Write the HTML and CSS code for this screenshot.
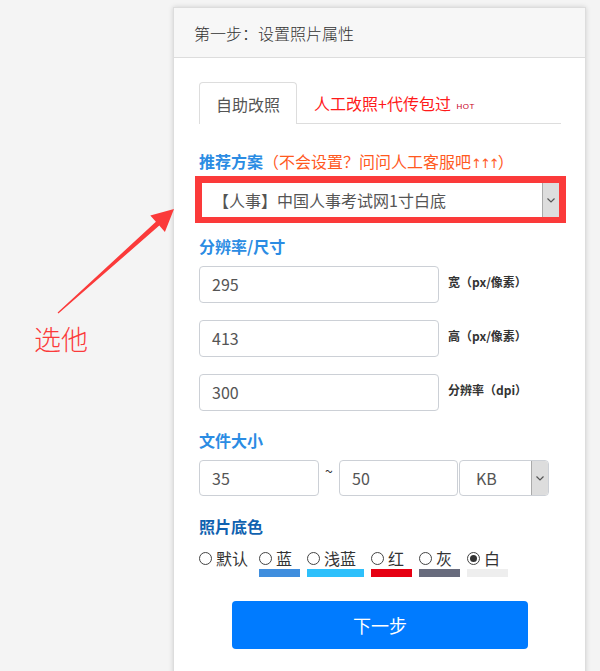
FILE: index.html
```html
<!DOCTYPE html>
<html lang="zh-CN">
<head>
    <meta charset="UTF-8">
    <meta name="viewport" content="width=device-width, initial-scale=1.0">
    <title>设置照片属性</title>
    <link rel="stylesheet" href="styles.css">
</head>
<body>
    <div class="hint">
        <svg class="hint-arrow" width="200" height="330" viewBox="0 0 200 330">
            <polygon points="57.6,312.4 155.9,221.8 150.3,215.5 174,209 164.9,231.9 159.3,225.6 58.4,313.6" fill="#fb3a3a"/>
        </svg>
        <span class="hint-text">选他</span>
    </div>

    <div class="card">
        <div class="card-head">第一步：设置照片属性</div>
        <div class="card-body">
            <div class="tabs">
                <div class="tab active">自助改照</div>
                <div class="tab hot">人工改照+代传包过 <sup>HOT</sup></div>
            </div>

            <div class="label">推荐方案<span class="tip">（不会设置？问问人工客服吧<span class="ups">↑↑↑</span>）</span></div>
            <div class="mark">
                <div class="select">
                    <span class="select-text">【人事】中国人事考试网1寸白底</span>
                    <span class="caret"><svg width="8" height="5" viewBox="0 0 8 5"><polyline points="0.5,0.5 4,4 7.5,0.5" fill="none" stroke="#555" stroke-width="1.2"/></svg></span>
                </div>
            </div>

            <div class="label">分辨率/尺寸</div>
            <div class="size-row">
                <div class="input">295</div>
                <span class="unit">宽（px/像素）</span>
            </div>
            <div class="size-row">
                <div class="input">413</div>
                <span class="unit">高（px/像素）</span>
            </div>
            <div class="size-row">
                <div class="input">300</div>
                <span class="unit">分辨率（dpi）</span>
            </div>

            <div class="label">文件大小</div>
            <div class="file-row">
                <div class="input small">35</div>
                <span class="tilde">~</span>
                <div class="input small">50</div>
                <div class="select kb">
                    <span class="select-text">KB</span>
                    <span class="caret"><svg width="8" height="5" viewBox="0 0 8 5"><polyline points="0.5,0.5 4,4 7.5,0.5" fill="none" stroke="#555" stroke-width="1.2"/></svg></span>
                </div>
            </div>

            <div class="label dark">照片底色</div>
            <div class="colors">
                <div class="opt first"><span class="radio"></span>默认</div>
                <div class="opt"><span class="radio"></span>蓝<i class="bar" style="background:#3f8ede"></i></div>
                <div class="opt"><span class="radio"></span>浅蓝<i class="bar" style="background:#2ec0fb"></i></div>
                <div class="opt"><span class="radio"></span>红<i class="bar" style="background:#e60012"></i></div>
                <div class="opt"><span class="radio"></span>灰<i class="bar" style="background:#686b7d"></i></div>
                <div class="opt"><span class="radio checked"></span>白<i class="bar" style="background:#eeeeee"></i></div>
            </div>

            <button class="next">下一步</button>
        </div>
    </div>
</body>
</html>
```

FILE: styles.css
```css
body {
    margin: 0;
    background: #f4f4f4;
    font-family: "Noto Sans CJK SC", "Noto Sans", sans-serif;
    color: #333;
    overflow: hidden;
}
.hint {
    position: absolute;
    left: 0;
    top: 0;
}
.hint-arrow {
    position: absolute;
    left: 0;
    top: 0;
}
.hint-text {
    position: absolute;
    left: 34px;
    top: 319px;
    font-size: 27px;
    font-weight: 300;
    line-height: 40px;
    color: #fb3a3a;
    white-space: nowrap;
}
.card {
    margin: 7px 0 0 173px;
    width: 413px;
    min-height: 720px;
    background: white;
    border: 1px solid #ddd;
    box-sizing: border-box;
    box-shadow: 0 0 5px rgba(0, 0, 0, 0.15);
}
.card-head {
    height: 49px;
    line-height: 50px;
    padding-left: 20px;
    background: #f7f7f7;
    border-bottom: 1px solid #ddd;
    font-size: 16px;
    font-weight: 300;
    color: #333;
}
.card-body {
    padding: 24px 24px 30px 25px;
}
.tabs {
    display: flex;
    align-items: flex-end;
    border-bottom: 1px solid #ddd;
    height: 41px;
}
.tab {
    height: 41px;
    line-height: 42px;
    padding: 0 16px;
    font-size: 16px;
    box-sizing: border-box;
}
.tab.active {
    border: 1px solid #ddd;
    border-bottom: none;
    border-radius: 4px 4px 0 0;
    background: white;
    color: #555;
    margin-bottom: -1px;
    height: 42px;
}
.tab.hot {
    color: #ff1a1a;
    padding-left: 17px;
}
.tab.hot sup {
    font-family: "Liberation Sans", sans-serif;
    font-size: 8px;
    letter-spacing: 0.5px;
    color: #c8001e;
    vertical-align: 1px;
    margin-left: 2px;
}
.label {
    height: 22px;
    font-size: 16px;
    font-weight: bold;
    color: #2b8ce3;
    line-height: 22px;
    margin-top: 18px;
}
.label.dark {
    color: #1062b0;
}
.tip {
    font-weight: normal;
    color: #ff5a1f;
}
.ups {
    font-family: "DejaVu Sans", sans-serif;
    font-size: 13px;
    line-height: 10px;
    letter-spacing: -2px;
}
.tabs + .label {
    margin-top: 26px;
}
.mark {
    margin: 4px 0 0 -4px;
    width: 371px;
    border: 7px solid #fb3a3a;
    border-bottom-width: 6px;
    box-sizing: border-box;
}
.select {
    display: flex;
    align-items: stretch;
    height: 34px;
    background: white;
}
.select-text {
    flex: 1;
    padding-left: 11px;
    font-size: 16px;
    line-height: 34px;
    color: #555;
}
.caret {
    width: 16px;
    background: #ddd;
    border-left: 1px solid #aaa;
    display: flex;
    align-items: center;
    justify-content: center;
}
.mark + .label {
    margin-top: 12px;
}
.size-row {
    display: flex;
    align-items: flex-start;
    margin-top: 9px;
}
.size-row + .size-row {
    margin-top: 17px;
}
.input {
    width: 240px;
    height: 37px;
    border: 1px solid #ccd0d6;
    border-radius: 4px;
    box-sizing: border-box;
    padding-left: 12px;
    font-size: 16px;
    line-height: 35px;
    color: #555;
}
.unit {
    margin: 7px 0 0 9px;
    font-size: 12px;
    font-weight: bold;
    color: #333;
}
.file-row {
    display: flex;
    align-items: flex-start;
    margin-top: 9px;
}
.input.small {
    width: 120px;
    height: 36px;
}
.file-row .input + .tilde + .input {
    width: 119px;
}
.tilde {
    width: 20px;
    text-align: center;
    font-size: 14px;
    line-height: 22px;
    color: #333;
}
.select.kb {
    width: 90px;
    height: 36px;
    margin-left: 1px;
    border: 1px solid #ccd0d6;
    border-radius: 4px;
    box-sizing: border-box;
    overflow: hidden;
}
.select.kb .select-text {
    padding-left: 16px;
    line-height: 34px;
}
.file-row + .label {
    margin-top: 19px;
}
.colors {
    display: flex;
    gap: 7px;
    margin-top: 10px;
}
.opt {
    display: flex;
    position: relative;
    padding-right: 8px;
    height: 30px;
    font-size: 16px;
    line-height: 22px;
    color: #333;
}
.opt.first {
    padding-right: 4px;
}
.radio {
    width: 11px;
    height: 11px;
    border: 1px solid #444;
    border-radius: 50%;
    margin: 5px 4px 0 0;
    position: relative;
}
.radio.checked::after {
    content: "";
    position: absolute;
    left: 2px;
    top: 2px;
    width: 7px;
    height: 7px;
    border-radius: 50%;
    background: #333;
}
.bar {
    position: absolute;
    left: 0;
    right: 0;
    bottom: 0;
    height: 8px;
}
.next {
    display: block;
    margin: 24px auto 0;
    width: 296px;
    height: 48px;
    border: none;
    border-radius: 4px;
    background: #007bff;
    color: white;
    font-family: inherit;
    font-size: 18px;
    cursor: pointer;
}
```
